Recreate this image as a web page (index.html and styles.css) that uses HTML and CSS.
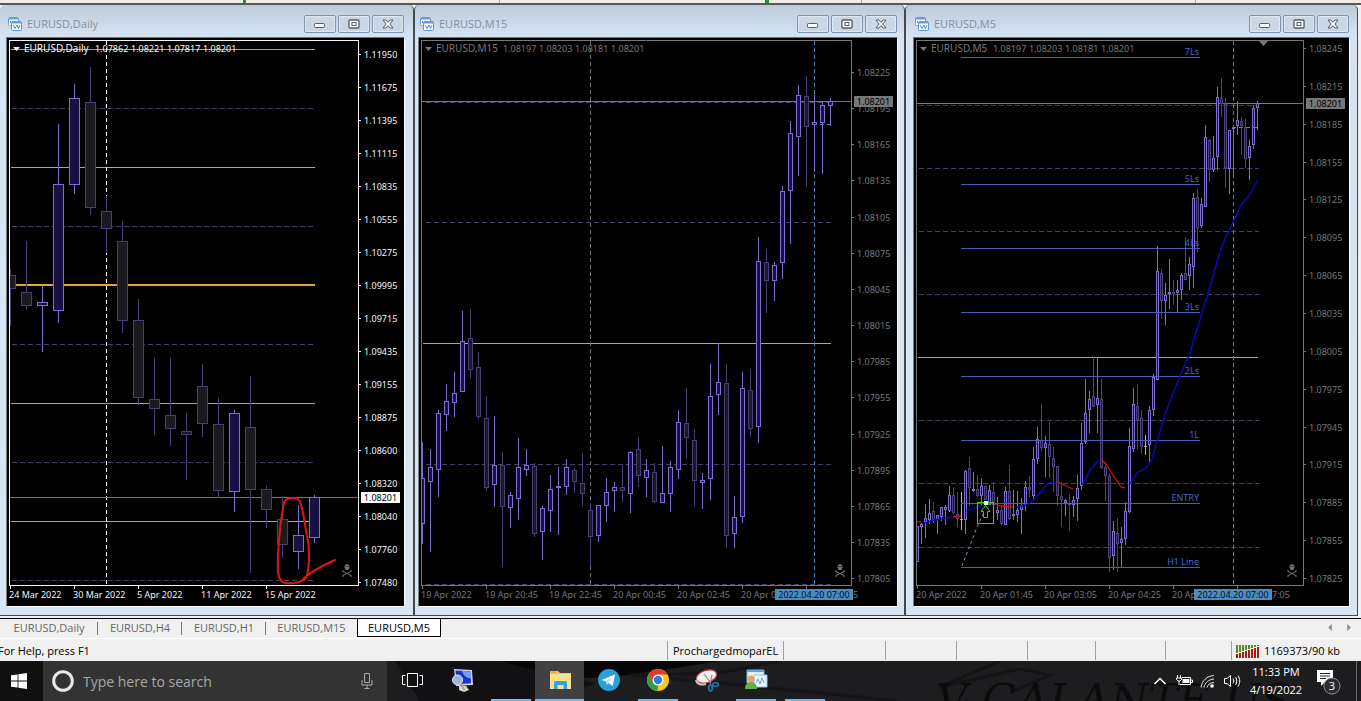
FILE: index.html
```html
<!DOCTYPE html>
<html lang="en">
<head>
<meta charset="utf-8">
<title>EURUSD charts</title>
<link rel="stylesheet" href="styles.css">
</head>
<body>
<svg class="defs" aria-hidden="true">
  <defs>
    <symbol id="doc" viewBox="0 0 14 14">
      <rect x="0.5" y="0.5" width="10" height="8" rx="1" fill="#fff" stroke="#6a9fd6"/>
      <path d="M1 1.5h9" stroke="#6a9fd6" stroke-width="2"/>
      <path d="M2.500 6V4M5 6V3.500M7.500 6V4" stroke="#4f8fd0"/>
      <rect x="3.500" y="4.500" width="10" height="9" rx="1" fill="#fff" stroke="#5b97d4"/>
      <path d="M4 5.500h9" stroke="#6a9fd6" stroke-width="2"/>
      <path d="M5 8l2 3.500L9 8l1.500 3.500L12 8" fill="none" stroke="#4f8fd0"/>
    </symbol>
    <symbol id="min" viewBox="0 0 14 12"><rect x="1.500" y="5.500" width="10" height="4" rx="1" fill="#fff" stroke="#555a66"/></symbol>
    <symbol id="max" viewBox="0 0 14 12"><rect x="2" y="2" width="10" height="8" rx="1" fill="#fff" stroke="#555a66" stroke-width="1.300"/><rect x="5" y="4.500" width="4" height="3" fill="#fff" stroke="#555a66"/></symbol>
    <symbol id="close" viewBox="0 0 14 12"><path d="M2 2h3l2 2.300L9 2h3L8.900 6l3.100 4H9L7 7.700 5 10H2l3.100-4z" fill="#fff" stroke="#555a66"/></symbol>
  </defs>
</svg>

<div class="toolstrip" aria-hidden="true"></div>

<main class="windows">
  <section class="win win-daily">
    <header class="title">
      <svg class="doc"><use href="#doc"/></svg><h2>EURUSD,Daily</h2>
      <button aria-label="Minimize"><svg><use href="#min"/></svg></button>
      <button aria-label="Maximize"><svg><use href="#max"/></svg></button>
      <button aria-label="Close"><svg><use href="#close"/></svg></button>
    </header>
    <div class="frame"><svg class="chart" id="daily" viewBox="7 38 397 568"></svg></div>
  </section>
  <section class="win win-m15">
    <header class="title">
      <svg class="doc"><use href="#doc"/></svg><h2>EURUSD,M15</h2>
      <button aria-label="Minimize"><svg><use href="#min"/></svg></button>
      <button aria-label="Maximize"><svg><use href="#max"/></svg></button>
      <button aria-label="Close"><svg><use href="#close"/></svg></button>
    </header>
    <div class="frame"><svg class="chart" id="m15" viewBox="419 38 478 568"></svg></div>
  </section>
  <section class="win win-m5">
    <header class="title">
      <svg class="doc"><use href="#doc"/></svg><h2>EURUSD,M5</h2>
      <button aria-label="Minimize"><svg><use href="#min"/></svg></button>
      <button aria-label="Maximize"><svg><use href="#max"/></svg></button>
      <button aria-label="Close"><svg><use href="#close"/></svg></button>
    </header>
    <div class="frame"><svg class="chart" id="m5" viewBox="914 38 435 568"></svg></div>
  </section>
</main>

<nav class="tabs">
  <button>EURUSD,Daily</button><button>EURUSD,H4</button><button>EURUSD,H1</button><button>EURUSD,M15</button><button class="active">EURUSD,M5</button>
  <span class="scroll">
    <button aria-label="Scroll left"><svg viewBox="0 0 6 8"><path d="M5 0v8L1 4z"/></svg></button>
    <button aria-label="Scroll right"><svg viewBox="0 0 6 8"><path d="M1 0v8l4-4z"/></svg></button>
  </span>
</nav>

<footer class="status">
  <span class="help">For Help, press F1</span>
  <span>ProchargedmoparEL</span><span></span><span></span><span></span><span></span><span></span><span></span>
  <span class="traffic"><svg viewBox="0 0 24 14" id="bars"></svg>1169373/90 kb</span>
</footer>

<div class="taskbar">
  <svg class="wall" viewBox="0 0 1361 40" preserveAspectRatio="xMaxYMid slice" aria-hidden="true">
    <path d="M395 0h110l90 22-40 18H420z" fill="#111113"/>
    <path d="M500 0h220l-90 14-60 4z" fill="#060607"/>
    <path d="M1000 0l-60 26 80-18 30 6-40 18" fill="none" stroke="#141416" stroke-width="3"/>
    <path d="M780 0l-60 12-90 2 110 10 160 16" fill="none" stroke="#151517" stroke-width="3"/>
    <text x="936" y="55" class="walltext">V GALANTE US</text>
  </svg>
  <button class="start" aria-label="Start"><svg viewBox="0 0 16 16"><path d="M0 2.300l6.600-.9v6.200H0zM7.400 1.300L16 0v7.600H7.400zM0 8.400h6.600v6.200L0 13.700zM7.400 8.400H16V16l-8.600-1.200z" fill="#fff"/></svg></button>
  <label class="search">
    <svg class="cortana" viewBox="0 0 24 24"><circle cx="12" cy="12" r="9.300" fill="none" stroke="#e8e8e8" stroke-width="3"/></svg>
    <input type="text" placeholder="Type here to search" aria-label="Search">
    <svg class="mic" viewBox="0 0 12 18"><path d="M3.500 1.500h5v9h-5zM1 8v5h10V8M6 13v3.500M3.500 16.500h5" fill="none" stroke="#a8a8a8"/></svg>
  </label>
  <div class="apps">
    <button aria-label="Task view"><svg viewBox="0 0 24 24"><path d="M6.500 5.500h10v13h-10zM4.500 7.500h-3v9h3M18.500 7.500h3v9h-3" fill="none" stroke="#fff"/></svg></button>
    <button aria-label="Computer"><svg viewBox="0 0 24 24"><path d="M4 1l18 1 1 15-17 1z" fill="#cdd6e8"/><path d="M5.500 2.500l15 .8.500 12-14 1z" fill="#1733c8"/><path d="M12 3l9 .4.3 7c-5 0-8-3-9.300-7.400z" fill="#7c9cf2"/><path d="M9 18l7 0 3 4-5 2-5-2z" fill="#ddd6c8"/><circle cx="7.500" cy="12" r="5" fill="#9fb3dc" stroke="#dfe8f8"/><path d="M10.500 16l4 6" stroke="#b69a80" stroke-width="2"/></svg></button>
    <button class="run" aria-label="App"></button>
    <button class="run on" aria-label="File Explorer"><svg viewBox="0 0 24 24"><path d="M2 3h8l2 2h11v16H2z" fill="#f0c95c"/><path d="M3 6h20v15H2V7z" fill="#fbe08d"/><path d="M3 4h5" stroke="#e08f42"/><path d="M6 21v-6.500a1.500 1.500 0 0 1 1.500-1.500h10a1.500 1.500 0 0 1 1.500 1.500V21h-3.500v-4h-6v4z" fill="#35a3dc"/></svg></button>
    <button aria-label="Telegram"><svg viewBox="0 0 24 24"><circle cx="12" cy="12" r="11" fill="#2a9fd8"/><path d="M4.500 12L18 6.500l-2.300 11.500-4-3-2 1.800-.5-3.400z" fill="#fff"/><path d="M9.200 13.400l6.800-5-4.700 6-1.600 2.400z" fill="#b8d6e8"/></svg></button>
    <button class="run" aria-label="Chrome"><svg viewBox="0 0 24 24"><circle cx="12" cy="12" r="11" fill="#f8c81c"/><path d="M2.500 6.500A11 11 0 0 1 21.500 6.500H12L7 15z" fill="#e23b2e"/><path d="M2.500 6.500L7.500 15l4.700 2.500L11.500 23A11 11 0 0 1 2.500 6.500z" fill="#2f9e4c"/><circle cx="12" cy="12" r="5.500" fill="#fff"/><circle cx="12" cy="12" r="4.200" fill="#3b78e7"/></svg></button>
    <button aria-label="Snipping Tool"><svg viewBox="0 0 24 24"><ellipse cx="11.500" cy="8.500" rx="10.500" ry="6" transform="rotate(-18 11.500 8.500)" fill="#f4eef0" stroke="#c0404e" stroke-width="1.200"/><path d="M1 12c1 5 6 5 10 4" fill="none" stroke="#d9bcc2" stroke-width="2"/><path d="M9 6l7 9M17 7l-2 9" stroke="#8a8f98" stroke-width="1.200"/><ellipse cx="15.500" cy="20" rx="1.800" ry="3" fill="none" stroke="#1b7bb5" stroke-width="1.600"/><ellipse cx="20.500" cy="16.500" rx="3" ry="1.800" fill="none" stroke="#1b7bb5" stroke-width="1.600"/></svg></button>
    <button class="run" aria-label="MetaTrader"><svg viewBox="0 0 24 24"><path d="M3 2h17v13H3z" fill="#dff0fb" stroke="#76b5e0"/><path d="M3 3h17" stroke="#5aa4dc" stroke-width="2"/><path d="M10 7h13v12H10z" fill="#eaf6ff" stroke="#8cc2ea"/><path d="M12 15l2-4 2 5 2-6 2 5" fill="none" stroke="#6aa4dc"/><circle cx="7" cy="11" r="3.500" fill="#e8a25c"/><path d="M1 21c0-5 3-7 6-7s6 2 6 7z" fill="#62b33e"/></svg></button>
    <button class="run" aria-label="App"></button>
  </div>
  <div class="tray">
    <button aria-label="Show hidden icons"><svg viewBox="0 0 18 18"><path d="M3.500 12L9 6.500l5.500 5.500" fill="none" stroke="#fff" stroke-width="1.500"/></svg></button>
    <button aria-label="Battery"><svg viewBox="0 0 18 18"><path d="M7 5.500h8.500v7H5M16 8h1.500v2.500H16" fill="none" stroke="#fff"/><path d="M7.500 7h7v4h-7z" fill="#fff"/><path d="M2.500 3v3M5.500 3v3M1.500 6h5v1.500L5 9H3L1.500 7.500zM4 9v4" fill="none" stroke="#fff"/></svg></button>
    <button aria-label="Network"><svg viewBox="0 0 18 18"><g fill="none" stroke="#e8e8e8"><path d="M2 15.500C3 8.500 8 4 15 3.500M5 15.500C6 10.500 9.500 7.500 15 7M8 15.500c.8-3 3.200-5 7-5"/></g><circle cx="13" cy="14" r="1.800" fill="#fff"/></svg></button>
    <button aria-label="Volume"><svg viewBox="0 0 18 18"><path d="M1.500 6.500h2.500l3.500-3v11l-3.500-3H1.500zM10 6.500c1 1.500 1 3.500 0 5M12.500 5c1.700 2.500 1.700 5.500 0 8M15 3.500c2.300 3.500 2.300 7.500 0 11" fill="none" stroke="#fff"/></svg></button>
    <time class="clock">11:33 PM<br>4/19/2022</time>
    <button class="note" aria-label="Notifications"><svg viewBox="0 0 28 28"><path d="M1 3h16v12H9l-4 4v-4H1z" fill="#fff"/><path d="M4 6.500h10M4 9h10M4 11.500h6" stroke="#222"/><circle cx="16" cy="19" r="8" fill="#2b2b2d" stroke="#8b8b8b"/></svg><span>3</span></button>
    <i class="peek"></i>
  </div>
</div>
<script src="charts.js"></script>
</body>
</html>
```
FILE: styles.css
```css
* { box-sizing: border-box; }
body {
  margin: 0;
  min-height: 100vh;
  display: flex;
  flex-direction: column;
  background: #f0f0f0;
  font-family: "Open Sans", "Noto Sans", sans-serif;
  font-size: 11px;
  color: #000;
  overflow-x: hidden;
}
button { font: inherit; color: inherit; border: 0; padding: 0; background: none; }
.defs { position: absolute; width: 0; height: 0; }
.toolstrip {
  height: 5px;
  border-bottom: 2px solid #55585c;
  background: linear-gradient(90deg, transparent 243px, #2c8a34 243px 246px, transparent 246px 499px, #a8a8a8 499px 500px, transparent 500px 765px, #2c8a34 765px 769px, transparent 769px 861px, #a8a8a8 861px 862px, transparent 862px 1195px, #a8a8a8 1195px 1196px, transparent 1196px), #efedec;
}

.windows {
  display: grid;
  grid-template-columns: 414fr 491fr 456fr;
  border-bottom: 1px solid #f0f0f0;
}
.win {
  background: linear-gradient(#bccbdb, #d6e3f2 32px, #d9e5f2);
  border: solid #45494e;
  border-width: 0 1px 1px;
  border-radius: 5px 5px 0 0;
  padding: 0 6px 8px 3px;
  min-width: 0;
}
.win-daily { border-left: 0; padding-left: 6px; padding-right: 8px; }
.win-m5 { padding-left: 7px; padding-right: 7px; margin-right: 3px; }
.title { display: flex; align-items: center; gap: 2px; height: 32px; padding: 5px 1px 0 2px; }
.title h2 { flex: 1; margin: 0 0 0 3px; font-size: 11px; font-weight: 400; color: #84909e; line-height: 18px; }
.title .doc { width: 14px; height: 14px; }
.title button {
  width: 32px; height: 18px;
  border: 1px solid #8293ac;
  border-radius: 2px;
  box-shadow: inset 0 0 0 1px #dfe9f4;
  background: #c9d7e6;
  display: grid;
  place-items: center;
}
.title button svg { width: 14px; height: 12px; }
.frame { border: 1px solid #fff; border-top-color: #6c7076; border-left-color: #7b7f84; background: #000; }
.chart { display: block; width: 100%; height: auto; background: #000; font: 9px "Noto Sans", "Open Sans", sans-serif; }
.chart .lead { font-size: 10px; }
.crisp { shape-rendering: crispEdges; }
.up { fill: #191145; stroke: #7c6fd0; }
.down { fill: #1b1a20; stroke: #463e74; }
.thin .up { fill: #17104a; }
.thin .down { stroke: #4d447c; }
.level { stroke: #4660c0; }
.leveltext { fill: #4468c4; text-anchor: end; }
.gold { stroke: #d9a23c; }
.dash { stroke: #47446a; stroke-dasharray: 5 3; }
.ma { fill: none; stroke: #0a0ad0; stroke-width: 1.3; }
.ma.red { stroke: #c81414; }

.tabs {
  display: grid;
  grid-template-columns: 98px 84px 84px 91px 84px 1fr;
  height: 21px;
  margin-top: 1px;
  border-top: 1px solid #000;
  border-bottom: 1px solid #fff;
  color: #666;
}
.tabs > button { position: relative; line-height: 18px; height: 18px; }
.tabs > button:nth-child(-n+3)::after { content: ""; position: absolute; right: 0; top: 3px; height: 13px; border-right: 1px solid #777; }
.tabs > .active { background: #fff; color: #000; border: 1px solid #000; border-top: 0; line-height: 17px; }
.scroll { display: flex; justify-content: flex-end; gap: 13px; padding-right: 9px; align-items: center; height: 17px; }
.scroll button { display: flex; }
.scroll svg { width: 6px; height: 7px; fill: #888; }

.status { display: grid; grid-template-columns: 1fr 116px 102px 71px 71px 68px 70px 66px 130px; height: 22px; line-height: 19px; padding: 2px 0 1px; }
.status span { border-left: 1px solid #a0a0a0; padding-left: 5px; white-space: nowrap; }
.status .help { border: 0; padding: 0; text-indent: -2px; }
.status .traffic { display: flex; align-items: center; gap: 4px; padding-left: 4px; }
.traffic svg { width: 24px; height: 14px; }

.taskbar { position: relative; display: flex; height: 40px; background: #1d1d1f; color: #fff; isolation: isolate; margin-top: auto; }
.wall { position: absolute; inset: 0; width: 100%; height: 40px; z-index: -1; }
.walltext { font: italic 44px "DejaVu Serif", serif; fill: #0b0b0c; }
.start { width: 43px; padding-right: 5px; background: #101011; }
.start svg { width: 16px; height: 16px; display: block; margin: auto; }
.search { width: 344px; background: #333; display: flex; align-items: center; padding: 0 14px 0 8px; gap: 8px; }
.cortana { width: 24px; height: 24px; flex: none; }
.search input { flex: 1; min-width: 0; border: 0; padding: 0; background: none; outline: 0; font: 14px "Open Sans", "Noto Sans", sans-serif; color: #fff; }
.search input::placeholder { color: #a8a8a8; opacity: 1; }
.mic { width: 12px; height: 18px; }
.apps { display: flex; flex: 1; padding-left: 1px; }
.apps button { width: 49px; height: 40px; display: grid; place-items: center; border-bottom: 2px solid transparent; }
.apps svg { width: 24px; height: 24px; }
.apps .run { background: linear-gradient(#76b9ed, #76b9ed) center bottom / 40px 2px no-repeat border-box; }
.apps .on { background: linear-gradient(#76b9ed, #76b9ed) center bottom / 100% 2px no-repeat border-box, #414143; }
.tray { display: flex; align-items: center; }
.tray > button { width: 24px; display: grid; place-items: center; }
.tray button svg { width: 18px; height: 18px; }
.clock { width: 64px; text-align: center; line-height: 18px; }
.tray .note { width: 44px; position: relative; }
.tray .note svg { width: 28px; height: 28px; }
.note span { position: absolute; left: 8px; top: 11px; width: 32px; text-align: center; line-height: 16px; }
.peek { width: 5px; height: 40px; margin-left: 4px; border-left: 1px solid #6a6a6a; }
```
FILE: charts.js
```js
const NS = "http://www.w3.org/2000/svg";
function add(parent, tag, attrs, text) {
  const e = document.createElementNS(NS, tag);
  for (const k in attrs) e.setAttribute(k, attrs[k]);
  if (text !== undefined) e.textContent = text;
  parent.appendChild(e);
  return e;
}
const hline = (g, x1, x2, y, a) => add(g, "line", { x1, x2, y1: y + 0.5, y2: y + 0.5, ...a });
const vline = (g, x, y1, y2, a) => add(g, "line", { x1: x + 0.5, x2: x + 0.5, y1, y2, ...a });

function frame(g, c) {
  add(g, "rect", { x: c.left + 0.5, y: 40.5, width: c.right - c.left, height: 545, fill: "none", stroke: c.ink });
}
// Each candle: high, low, body top, body bottom, direction (1 up, 0 down, 2 doji)
function candles(g, rows, x0, step, half) {
  rows.forEach((r, i) => {
    const x = x0 + i * step;
    const [hi, lo, top, bot, dir] = r;
    if (dir === 2) {
      vline(g, x, hi, lo, { stroke: "#b5b59a" });
      hline(g, x - 1, x + 2, top, { stroke: "#b5b59a" });
      return;
    }
    const cls = dir ? "up" : "down";
    vline(g, x, hi, lo, { class: cls });
    add(g, "rect", { x: x - half + 0.5, y: top + 0.5, width: half * 2, height: Math.max(1, bot - top - 1), class: cls });
  });
}
function prices(svg, g, c, labels, centres) {
  centres.forEach((y, i) => {
    hline(g, c.right, c.right + 3, y, { stroke: c.ink });
    add(svg, "text", { x: c.px, y: y + 4, fill: c.ink }, labels[i]);
  });
}
function skull(svg, x, y) {
  const g = add(svg, "g", { fill: "none", stroke: "#77777a", transform: `translate(${x} ${y})` });
  add(g, "path", { d: "M-2.500-3a2.500 2.800 0 1 1 5 0c0 1.500-1 1.500-1 3h-3c0-1.500-1-1.500-1-3z", fill: "#77777a", stroke: "none" });
  add(g, "path", { d: "M-1.500-3.500h1M.5-3.500h1", stroke: "#000" });
  add(g, "path", { d: "M-4 1.500L4 5.500M-4 5.500L4 1.500" });
  add(g, "path", { d: "M-4 0v2M4 0v2M-4 5v2M4 5v2" });
}
function heading(svg, c, name, quotes, nx, qx) {
  add(svg, "path", { d: `M${c.left + 4} 47h7l-3.500 4z`, fill: c.ink });
  add(svg, "text", { x: nx, y: 52, fill: c.ink, class: "lead" }, name);
  quotes.forEach((q, i) => add(svg, "text", { x: qx + i * 36, y: 52, fill: c.ink }, q));
}
function dates(svg, g, c, list, x0) {
  list.forEach((d, i) => {
    vline(g, x0 + i * 64, 586, 589, { stroke: c.ink });
    add(svg, "text", { x: x0 + i * 64 - 1, y: 598, fill: c.ink }, d);
  });
}
function tag(svg, x, y, w, fill, ink, text, h) {
  add(svg, "rect", { x, y, width: w, height: h, fill });
  add(svg, "text", { x: x + w / 2, y: y + h - 2, fill: ink, "text-anchor": "middle" }, text);
}
const range = (start, stepVal, n) => Array.from({ length: n }, (_, i) => Math.round(start + i * stepVal));

// Daily
(function () {
  const svg = document.getElementById("daily");
  const c = { left: 9, right: 358, ink: "#f4f4f4", px: 364 };
  const g = add(svg, "g", { class: "crisp" });
  [49, 167, 403, 521].forEach(y => hline(g, 11, 315, y, { class: "gold" }));
  add(g, "rect", { x: 11, y: 284, width: 304, height: 2, fill: "#dca83c" });
  [108, 226, 344, 462, 580].forEach(y => hline(g, 12, 315, y, { class: "dash" }));
  vline(g, 106, 41, 585, { stroke: "#fff", "stroke-dasharray": "4 3" });
  hline(g, 10, 360, 497, { stroke: "#77777a" });
  vline(g, 10, 269, 326, { class: "down" });
  add(g, "path", { d: "M10 275.500h5.500v13H10", class: "down" });
  candles(g, [
    [241,309,292,306,0],[285,352,302,306,1],[124,323,184,311,1],[84,194,98,185,1],[67,215,102,208,0],
    [196,253,211,229,0],[221,333,241,321,0],[299,405,320,398,0],[358,435,399,409,0],[358,446,415,429,0],
    [413,480,431,435,0],[364,437,386,424,0],[398,498,424,491,0],[410,512,413,492,1],[376,573,427,490,0],
    [486,528,489,510,0],[496,558,519,545,0],[505,569,535,552,1],[495,543,497,538,1]
  ], 26, 16, 5);
  frame(g, c);
  prices(svg, g, c, ["1.11950","1.11675","1.11395","1.11115","1.10835","1.10555","1.10275","1.09995","1.09715","1.09435","1.09155","1.08875","1.08600","1.08320","1.08040","1.07760","1.07480"], range(54, 33, 17));
  heading(svg, c, "EURUSD,Daily", ["1.07862","1.08221","1.07817","1.08201"], 24, 95);
  dates(svg, g, c, ["24 Mar 2022","30 Mar 2022","5 Apr 2022","11 Apr 2022","15 Apr 2022"], 10);
  tag(svg, 361, 492, 39, "#fff", "#000", "1.08201", 11);
  skull(svg, 347, 570);
  add(svg, "path", { d: "M284 503c1-6 14-7 16-1 4 9 5 27 8 39 2 12 1 30-2 37-3 4-14 6-21 5-9-3-7-16-7-28 1-17 3-39 6-52M303 579c8-7 18-13 32-19", fill: "none", stroke: "#e01414", "stroke-width": 2, "stroke-linecap": "round" });
})();

// M15
(function () {
  const svg = document.getElementById("m15");
  const c = { left: 421, right: 851, ink: "#77777a", px: 857 };
  const g = add(svg, "g", { class: "crisp" });
  hline(g, 423, 831, 343, { class: "gold" });
  [102, 222, 464, 584].forEach(y => hline(g, 426, 831, y, { class: "dash" }));
  vline(g, 590, 41, 585, { stroke: "#6f6f6f", "stroke-dasharray": "4 3" });
  vline(g, 814, 41, 585, { stroke: "#4880b4", "stroke-dasharray": "4 3" });
  hline(g, 422, 851, 101, { stroke: "#77777a" });
  candles(g, [
    [442,544,478,524,1],[449,552,467,482,1],[410,497,413,470,1],[384,431,401,415,1],[372,417,393,403,1],[311,392,341,392,1],
    [309,379,338,370,0],[352,419,367,417,0],[396,491,418,488,0],[416,507,465,485,1],[452,567,465,507,0],[492,528,495,508,1],
    [438,520,467,499,1],[449,476,465,470,1],[463,537,466,534,0],[506,560,508,532,1],[475,532,489,511,1],[467,535,486,488,1],
    [459,495,467,487,1],[468,493,470,482,0],[453,506,483,494,0],[503,566,510,537,0],[505,542,505,536,1],[478,522,492,506,1],
    [482,512,487,491,1],[466,502,487,491,0],[451,513,452,494,1],[437,487,449,476,0],[459,497,470,478,1],[463,503,472,502,0],
    [446,503,493,503,1],[461,512,467,494,1],[410,479,422,470,1],[388,459,423,438,0],[429,506,440,481,0],[473,509,480,483,1],
    [364,500,396,479,1],[343,415,382,395,1],[364,548,383,536,0],[496,548,517,534,1],[372,523,388,517,1],[369,437,390,429,0],
    [237,443,261,427,1],[249,313,262,281,0],[262,301,265,281,1],[186,279,191,263,1],[121,244,133,191,1],[85,176,95,137,1],
    [76,187,96,127,0],[95,172,122,125,1],[102,174,105,123,1],[98,126,101,106,1]
  ], 422, 8, 2);
  hline(g, 820, 831, 124, { stroke: "#4880b4", "stroke-dasharray": "4 3" });
  add(g, "rect", { x: 419, y: 38, width: 2, height: 568, fill: "#000" });
  frame(g, c);
  prices(svg, g, c, ["1.08225","1.08195","1.08165","1.08135","1.08105","1.08075","1.08045","1.08015","1.07985","1.07955","1.07925","1.07895","1.07865","1.07835","1.07805"], range(72, 36.15, 15));
  heading(svg, c, "EURUSD,M15", ["1.08197","1.08203","1.08181","1.08201"], 436, 503);
  dates(svg, g, c, ["19 Apr 2022","19 Apr 20:45","19 Apr 22:45","20 Apr 00:45","20 Apr 02:45","20 Apr 04:45"], 422);
  add(svg, "text", { x: 853, y: 598, fill: c.ink }, "5");
  vline(g, 806, 586, 589, { stroke: c.ink });
  tag(svg, 854, 96, 39, "#77777a", "#000", "1.08201", 11);
  tag(svg, 775, 589, 78, "#4a8cc0", "#06111c", "2022.04.20 07:00", 11);
  skull(svg, 840, 570);
})();

// M5
(function () {
  const svg = document.getElementById("m5");
  const c = { left: 916, right: 1303, ink: "#77777a", px: 1309 };
  const g = add(svg, "g", { class: "crisp thin" });
  hline(g, 918, 1258, 357, { class: "gold" });
  [105, 168, 231, 294, 420, 483, 547].forEach(y => hline(g, 919, 1259, y, { class: "dash" }));
  vline(g, 1233, 41, 585, { stroke: "#4880b4", "stroke-dasharray": "4 3" });
  hline(g, 917, 1303, 103, { stroke: "#77777a" });
  candles(g, [
    [526,562,526,562,1],[523,544,524,527,1],[504,538,518,522,1],[499,524,513,520,1],[502,523,511,520,0],[515,534,515,520,1],
    [507,521,507,517,1],[505,525,507,510,1],[486,512,495,511,1],[487,514,495,513,0],[492,527,514,519,0],[492,530,519,519,2],
    [470,534,471,520,1],[457,506,468,488,0],[472,492,489,491,1],[475,497,489,496,0],[478,505,486,496,1],[485,500,486,500,0],
    [485,505,490,505,1],[482,514,492,505,0],[497,520,510,513,1],[505,525,510,524,0],[487,525,491,525,1],[465,520,491,519,0],
    [490,520,514,516,1],[491,522,510,515,1],[498,534,505,510,1],[481,511,487,505,1],[476,497,487,490,0],[447,500,459,496,1],
    [427,464,439,459,1],[404,451,440,448,0],[436,477,443,448,1],[422,478,444,457,0],[447,492,458,467,0],[466,506,466,496,0],
    [482,527,496,500,0],[499,516,500,503,1],[494,531,503,505,0],[496,517,500,505,1],[475,521,488,499,1],[423,490,443,486,1],
    [379,444,413,442,1],[391,433,399,410,1],[357,407,396,407,0],[357,433,398,405,1],[379,469,399,468,0],[462,501,467,476,0],
    [473,572,476,558,0],[521,570,531,556,1],[518,572,533,544,0],[527,567,539,543,1],[502,545,511,539,1],[428,513,446,512,1],
    [388,452,404,449,1],[384,449,406,420,0],[410,454,418,447,0],[435,455,446,446,2],[406,462,410,445,1],[374,416,377,410,1],
    [246,380,271,380,1],[269,319,273,301,0],[283,325,295,301,1],[259,309,292,294,1],[280,305,292,294,0],[280,312,290,293,1],
    [273,300,275,290,1],[237,280,273,280,0],[257,290,264,276,1],[193,288,198,267,1],[189,253,197,228,0],[198,228,204,226,1],
    [125,207,137,207,1],[139,182,140,170,0],[136,172,158,170,1],[87,170,97,157,1],[78,117,98,104,0],[98,188,104,168,0],
    [130,194,130,169,1],[127,176,127,129,1],[101,135,120,126,1],[117,155,121,126,0],[119,168,127,159,0],[140,180,146,158,1],
    [105,149,108,145,1],[101,130,103,108,1]
  ], 917, 4, 1);
  hline(g, 1232, 1257, 127, { stroke: "#4880b4", "stroke-dasharray": "4 3" });
  [[57,"7Ls"],[184,"5Ls"],[248,"4Ls"],[312,"3Ls"],[376,"2Ls"],[440,"1L"],[503,"ENTRY"],[567,"H1 Line"]].forEach(([y, t]) => {
    hline(g, 961, 1200, y, { class: "level" });
    add(svg, "text", { x: 1199, y: y - 2, class: "leveltext" }, t);
  });
  [
    "924,523 935,520 952,517", "966,511 977,507 987,504", "1017,507 1029,504 1040,493 1048,483 1055,482",
    "1082,485 1090,470 1099,460",
    "1129,485 1138,472 1146,468 1152,459 1158,438 1166,412 1176,386 1185,364 1190,354 1193,342 1200,320 1205,303 1212,280 1221,248 1232,224 1241,205 1249,196 1257,181"
  ].forEach(p => add(svg, "polyline", { points: p, class: "ma" }));
  ["917,522 921,522", "953,517 961,516", "994,504 1000,506 1013,507", "1057,482 1064,485 1073,489", "1101,460 1106,464 1113,475 1121,487 1125,488"]
    .forEach(p => add(svg, "polyline", { points: p, class: "ma red" }));
  add(svg, "path", { d: "M962 566L977 527 985 510", fill: "none", stroke: "#8a86b8", "stroke-dasharray": "3 3" });
  const signal = add(svg, "g", { class: "crisp" });
  add(signal, "rect", { x: 977.5, y: 502.5, width: 16, height: 21, fill: "none", stroke: "#1ee01e" });
  add(svg, "path", { d: "M985.500 505.500l4.500 6h-2.500v6h-4v-6h-2.500z", fill: "#000", stroke: "#1ee01e" });
  add(signal, "rect", { x: 984, y: 501, width: 4, height: 4, fill: "#dfffdc" });
  add(svg, "path", { d: "M1259 41h9l-4.500 5z", fill: "#77777a" });
  frame(g, c);
  prices(svg, g, c, ["1.08245","1.08215","1.08185","1.08155","1.08125","1.08095","1.08065","1.08035","1.08005","1.07975","1.07945","1.07915","1.07885","1.07855","1.07825"], range(48, 37.85, 15));
  heading(svg, c, "EURUSD,M5", ["1.08197","1.08203","1.08181","1.08201"], 931, 993);
  dates(svg, g, c, ["20 Apr 2022","20 Apr 01:45","20 Apr 03:05","20 Apr 04:25","20 Apr 05:45"], 917);
  add(svg, "text", { x: 1272, y: 598, fill: c.ink }, "7:05");
  vline(g, 1237, 586, 589, { stroke: c.ink });
  tag(svg, 1306, 98, 39, "#77777a", "#000", "1.08201", 11);
  tag(svg, 1194, 589, 78, "#4a8cc0", "#06111c", "2022.04.20 07:00", 11);
  skull(svg, 1292, 570);
})();

// Connection bars
(function () {
  const b = document.getElementById("bars");
  for (let i = 0; i < 8; i++) {
    const split = 9 - i;
    add(b, "rect", { x: i * 3, y: 1, width: 2, height: Math.max(1, split - 1), fill: "#5a8a1e" });
    add(b, "rect", { x: i * 3, y: split + 1, width: 2, height: 13 - split, fill: "#a01c14" });
  }
})();
```
